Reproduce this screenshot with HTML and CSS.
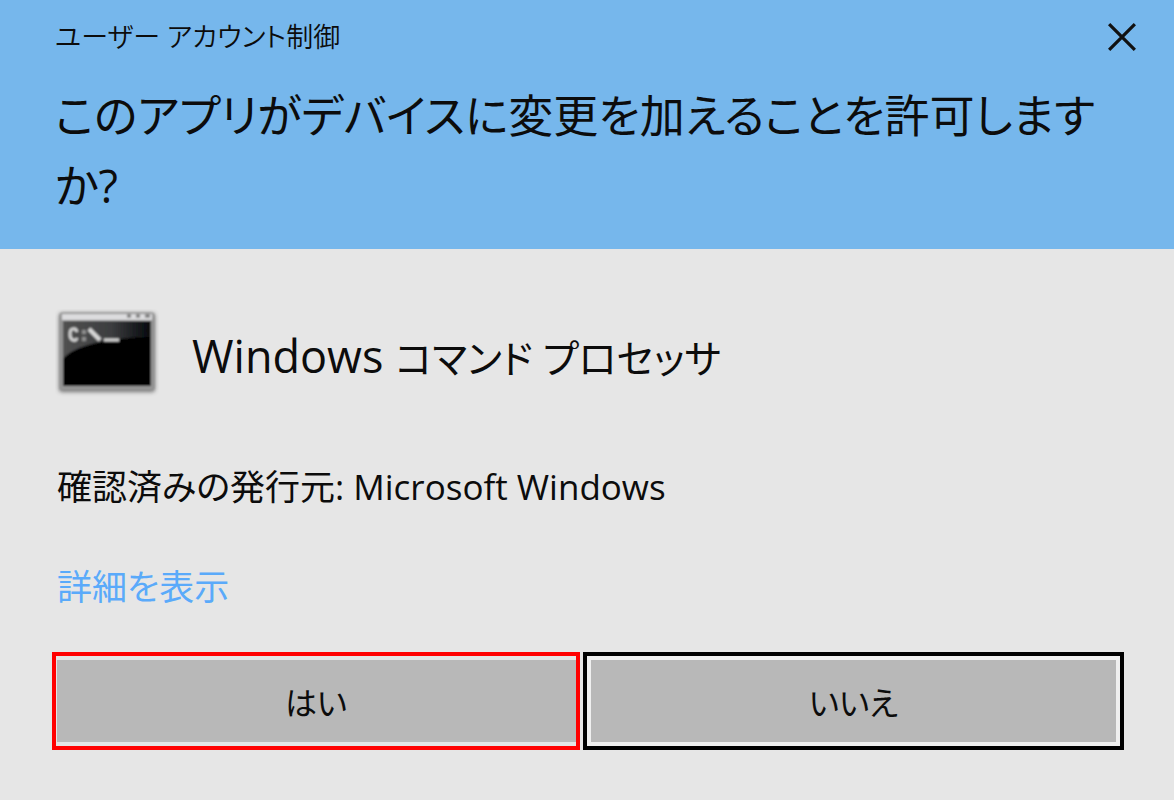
FILE: index.html
```html
<!DOCTYPE html>
<html lang="ja">
<head>
<meta charset="utf-8">
<meta name="viewport" content="width=device-width, initial-scale=1">
<title>ユーザー アカウント制御</title>
<link rel="stylesheet" href="styles.css">
</head>
<body>
<main class="dialog">
  <header class="header">
    <div class="title-bar">
      <p class="caption">ユーザー アカウント制御</p>
      <button class="close" type="button" aria-label="閉じる">
        <svg class="close-icon" viewBox="0 0 28 28" aria-hidden="true"><path d="M2 2 26 26M26 2 2 26"/></svg>
      </button>
    </div>
    <h1 class="question">このアプリがデバイスに変更を加えることを許可しますか?</h1>
  </header>
  <section class="content">
    <div class="app">
      <svg class="app-icon" viewBox="0 0 104 88" aria-hidden="true">
        <defs>
          <linearGradient id="gloss" x1="0" y1="0" x2="1" y2="0">
            <stop offset="0" stop-color="#505050"/>
            <stop offset=".55" stop-color="#3c3d3f"/>
            <stop offset="1" stop-color="#06080c"/>
          </linearGradient>
          <filter id="shadow" x="-10%" y="-10%" width="120%" height="120%"><feGaussianBlur stdDeviation="2"/></filter>
          <filter id="soft"><feGaussianBlur stdDeviation=".8"/></filter>
        </defs>
        <rect x="4" y="4" width="96" height="79" rx="3" fill="#555" opacity=".75" filter="url(#shadow)"/>
        <g filter="url(#soft)">
          <rect x="5" y="4" width="94" height="77" rx="2" fill="#969696"/>
          <rect x="7" y="5" width="90" height="6" fill="#dcdcde"/>
          <path d="M72 7h4M81 7h4M90 7h5" stroke="#6f6f6f" stroke-width="3"/>
          <rect x="8" y="12" width="88" height="65" fill="#020303"/>
          <path d="M8 12H96V28C55 29 20 35 8 50Z" fill="url(#gloss)"/>
          <path d="M22 23C21 19 15 18 15 25S21 33 22 29" fill="none" stroke="#d2d2d2" stroke-width="3"/>
          <path d="M29 21v4M29 28v4" stroke="#8f8f8f" stroke-width="4"/>
          <path d="M34 20 45 31" stroke="#d8d8d8" stroke-width="4"/>
          <path d="M49 31H64" stroke="#d8d8d8" stroke-width="3"/>
        </g>
      </svg>
      <h2 class="app-name">Windows <span class="app-name-kana">コマンド プロセッサ</span></h2>
    </div>
    <p class="publisher">確認済みの発行元: Microsoft Windows</p>
    <a class="details" href="#">詳細を表示</a>
    <div class="actions">
      <button class="button button-yes" type="button">はい</button>
      <button class="button button-no" type="button">いいえ</button>
    </div>
  </section>
</main>
</body>
</html>
```
FILE: styles.css
```css
* {
  box-sizing: border-box;
}

body {
  margin: 0;
  background: #e6e6e6;
  color: #0c0c0c;
  font-family: "Open Sans", "Noto Sans CJK JP", sans-serif;
  font-feature-settings: "palt";
}

h1, h2, p {
  margin: 0;
  font-weight: 400;
}

.header {
  padding: 16px 37px 28px 55px;
  background: #76b7ec;
}

.title-bar {
  display: flex;
  justify-content: space-between;
  align-items: center;
}

.caption {
  font-size: 27px;
  line-height: 41px;
  font-weight: 350;
}

.close {
  display: flex;
  padding: 0;
  border: 0;
  background: none;
}

.close-icon {
  width: 30px;
  height: 30px;
  fill: none;
  stroke: #111;
  stroke-width: 3;
}

.question {
  margin-top: 24px;
  font-size: 45px;
  line-height: 70px;
}

.content {
  padding: 60px 50px 50px 52px;
}

.app {
  display: flex;
  align-items: flex-start;
  gap: 33px;
  padding-left: 3px;
}

.app-icon {
  flex: none;
  width: 104px;
  height: 88px;
}

.app-name {
  padding-top: 12px;
  font-size: 45px;
  line-height: 70px;
}

.app-name-kana {
  font-size: 39px;
}

.publisher {
  margin: 66px 0 0 5px;
  font-size: 35px;
  line-height: 48px;
}

.details {
  display: block;
  width: fit-content;
  margin: 52px 0 0 5px;
  color: #5aaafa;
  font-size: 35px;
  line-height: 48px;
  text-decoration: none;
}

.actions {
  display: grid;
  grid-template-columns: 528fr 541fr;
  gap: 3px;
  margin-top: 41px;
}

.button {
  height: 98px;
  padding: 0;
  border: 4px solid;
  background: #b8b8b8;
  color: #0c0c0c;
  font: inherit;
  font-size: 32px;
}

.button-yes {
  border-color: #f00;
  box-shadow: inset 0 4px #e4e4e4, inset 0 -4px #e4e4e4, inset 1px 0 #e4e4e4;
}

.button-no {
  border-color: #000;
  box-shadow: inset 0 0 0 4px #efefef;
}
```
